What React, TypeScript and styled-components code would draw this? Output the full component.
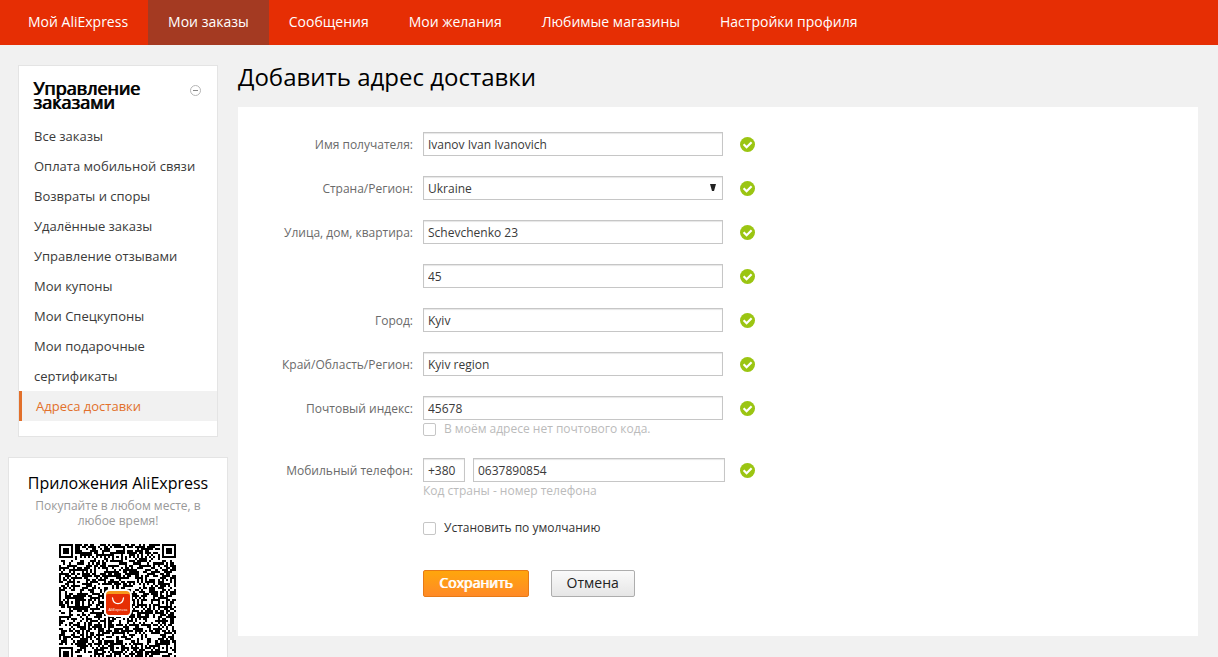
import React from 'react';
import styled, { createGlobalStyle, css } from 'styled-components';

const GlobalStyle = createGlobalStyle`
  *, *::before, *::after {
    box-sizing: border-box;
  }
  body {
    margin: 0;
    background: #f1f1f1;
    color: #333;
    font-family: 'Open Sans', sans-serif;
    font-size: 13px;
  }
  input, select, button {
    font-family: inherit;
  }
`;

const TopBar = styled.nav`
  background: #e62e04;
  padding-left: 8px;
`;

const TabList = styled.ul`
  display: flex;
  margin: 0;
  padding: 0;
  list-style: none;
`;

const Tab = styled.a<{ $active?: boolean }>`
  display: block;
  padding: 0 20px 2px;
  font-size: 14px;
  line-height: 43px;
  color: #fff;
  text-decoration: none;
  background: ${(p) => (p.$active ? '#a43a22' : 'transparent')};
`;

const Page = styled.div`
  display: flex;
  align-items: flex-start;
  gap: 10px;
  padding: 20px 20px 0 8px;
`;

const Sidebar = styled.aside`
  flex: 0 0 220px;
  display: flex;
  flex-direction: column;
  gap: 20px;
`;

const Card = styled.section`
  background: #fff;
  border: 1px solid #e4e4e4;
`;

const MenuCard = styled(Card)`
  margin: 0 10px;
  padding: 15px 0 15px;
`;

const MenuHeader = styled.div`
  display: flex;
  justify-content: space-between;
  align-items: flex-start;
  padding: 0 16px 12px 14px;
`;

const MenuTitle = styled.h2`
  margin: 0;
  width: 120px;
  font-size: 18px;
  line-height: 14px;
  font-weight: 400;
  color: #000;
  text-shadow: 1px 0 0 #000;
`;

const CollapseButton = styled.button`
  display: flex;
  margin-top: 4px;
  padding: 0;
  border: 0;
  background: none;
  cursor: pointer;
`;

const MenuList = styled.ul`
  margin: 0;
  padding: 0;
  list-style: none;
`;

const MenuLink = styled.a<{ $active?: boolean }>`
  display: block;
  padding: 0 20px 0 15px;
  line-height: 30px;
  color: #3a3a3a;
  text-decoration: none;
  ${(p) =>
    p.$active &&
    css`
      padding-left: 14px;
      border-left: 3px solid #e2702b;
      background: #f1f1f1;
      color: #e2702b;
    `}
`;

const AppCard = styled(Card)`
  padding: 14px 15px 20px;
  text-align: center;
`;

const AppTitle = styled.h2`
  margin: 0;
  font-size: 16px;
  line-height: 22px;
  font-weight: 400;
  color: #000;
`;

const AppText = styled.p`
  margin: 4px 0 16px;
  font-size: 12px;
  line-height: 15px;
  color: #999;
`;

const Main = styled.main`
  flex: 1;
  min-width: 0;
`;

const Title = styled.h1`
  margin: 0 0 18px;
  font-size: 24px;
  line-height: 24px;
  font-weight: 400;
  color: #000;
`;

const Panel = styled.form`
  display: flex;
  flex-direction: column;
  gap: 20px;
  padding: 25px 20px 39px 0;
  background: #fff;
`;

const Row = styled.div`
  display: grid;
  grid-template-columns: 175px 307px 15px;
  column-gap: 10px;
  align-items: start;
`;

const Label = styled.label`
  height: 24px;
  font-size: 12px;
  line-height: 26px;
  text-align: right;
  color: #6a6a6a;
`;

const Field = styled.div`
  grid-column: 2;
`;

const control = css`
  display: block;
  height: 24px;
  padding: 0 4px;
  border: 1px solid #c6c6c6;
  border-radius: 0;
  background: #fff;
  box-shadow: inset 0 1px 1px #e6e6e6;
  font-size: 12px;
  line-height: 22px;
  color: #3a3a3a;
  outline: none;
`;

const TextInput = styled.input<{ $width?: number }>`
  ${control}
  width: ${(p) => p.$width ?? 300}px;
`;

const SelectBox = styled.div`
  position: relative;
  width: 300px;
`;

const Select = styled.select`
  ${control}
  width: 100%;
  padding-top: 1px;
  appearance: none;
`;

const SelectArrow = styled.svg`
  position: absolute;
  right: 7px;
  top: 8px;
  pointer-events: none;
`;

const PhoneInputs = styled.div`
  display: flex;
  gap: 8px;
`;

const Hint = styled.p`
  margin: 0;
  font-size: 12px;
  line-height: 18px;
  color: #bbb;
`;

const CheckLabel = styled.label<{ $muted?: boolean }>`
  display: flex;
  align-items: center;
  gap: 8px;
  height: ${(p) => (p.$muted ? 18 : 16)}px;
  font-size: 12px;
  line-height: 16px;
  color: ${(p) => (p.$muted ? '#bbb' : '#333')};
`;

const Checkbox = styled.input`
  appearance: none;
  width: 13px;
  height: 13px;
  margin: 0;
  border: 1px solid #c6c6c6;
  border-radius: 2px;
  background: #fff;
`;

const StatusIcon = styled.svg`
  display: block;
  margin-top: 5px;
`;

const Actions = styled.div`
  display: flex;
  gap: 22px;
  padding: 14px 0 0 185px;
`;

const Button = styled.button<{ $primary?: boolean }>`
  height: 27px;
  padding: 0 15px 1px;
  border: 1px solid ${(p) => (p.$primary ? '#e77a16' : '#adadad')};
  border-radius: 2px;
  background: ${(p) =>
    p.$primary
      ? 'linear-gradient(#ffa60c, #ff8a27)'
      : 'linear-gradient(#fafafa, #e6e6e6)'};
  font-size: 14px;
  line-height: 24px;
  color: ${(p) => (p.$primary ? '#fff' : '#222')};
  text-shadow: ${(p) => (p.$primary ? '1px 0 0 #fff' : 'none')};
  cursor: pointer;
`;

const ValidMark = () => (
  <StatusIcon width="15" height="15" viewBox="0 0 15 15" role="img" aria-label="Верно">
    <circle cx="7.5" cy="7.5" r="7.5" fill="#9bc512" />
    <path d="M3.6 7.2l3 3 5-5" fill="none" stroke="#fff" strokeWidth="2.2" />
  </StatusIcon>
);

const QR_SIZE = 57;
const ALIGNMENT = [6, 28, 50];

function isDark(x: number, y: number): boolean {
  const last = QR_SIZE - 7;
  const corners = [[0, 0], [last, 0], [0, last]];
  for (const [cx, cy] of corners) {
    const d = Math.max(Math.abs(x - cx - 3), Math.abs(y - cy - 3));
    if (d <= 4) return d <= 1 || d === 3;
  }
  for (const ax of ALIGNMENT) {
    for (const ay of ALIGNMENT) {
      const onFinder = (ax === 6 && ay === 6) || (ax === 6 && ay === 50) || (ax === 50 && ay === 6);
      const d = Math.max(Math.abs(x - ax), Math.abs(y - ay));
      if (!onFinder && d <= 2) return d !== 1;
    }
  }
  if (x === 6 || y === 6) return (x + y) % 2 === 0;
  let h = Math.imul(x + 11, 374761393) ^ Math.imul(y + 7, 668265263);
  h = Math.imul(h ^ (h >>> 13), 1274126177);
  h ^= h >>> 16;
  return (h & 255) < 140;
}

function qrPath(): string {
  let d = '';
  for (let y = 0; y < QR_SIZE; y++) {
    for (let x = 0; x < QR_SIZE; x++) {
      if (isDark(x, y)) d += `M${x} ${y}h1v1h-1z`;
    }
  }
  return d;
}

const QrCode = () => (
  <svg width="118" height="118" viewBox="0 0 118 118" role="img" aria-label="QR">
    <path d={qrPath()} transform="scale(2.0526)" fill="#000" shapeRendering="crispEdges" />
    <rect x="45" y="45" width="28" height="28" rx="6" fill="#fff" />
    <rect x="47" y="47" width="24" height="24" rx="4" fill="#f7981d" />
    <path d="M47 52q0-2 2-2h20q2 0 2 2v15q0 4-4 4h-16q-4 0-4-4z" fill="#e62e04" />
    <path d="M53.5 54c1 7.5 10 7.5 11 0" fill="none" stroke="#fff" strokeWidth="1.3" strokeLinecap="round" />
    <text x="59" y="67" fontSize="4" textAnchor="middle" fill="#fff">AliExpress</text>
  </svg>
);

const tabs = ['Мой AliExpress', 'Мои заказы', 'Сообщения', 'Мои желания', 'Любимые магазины', 'Настройки профиля'];

const menu = [
  'Все заказы',
  'Оплата мобильной связи',
  'Возвраты и споры',
  'Удалённые заказы',
  'Управление отзывами',
  'Мои купоны',
  'Мои Спецкупоны',
  'Мои подарочные сертификаты',
  'Адреса доставки',
];

export default function App() {
  return (
    <>
      <GlobalStyle />
      <TopBar>
        <TabList>
          {tabs.map((name, i) => (
            <li key={name}>
              <Tab href="#" $active={i === 1}>{name}</Tab>
            </li>
          ))}
        </TabList>
      </TopBar>
      <Page>
        <Sidebar>
          <MenuCard>
            <MenuHeader>
              <MenuTitle>Управление заказами</MenuTitle>
              <CollapseButton type="button" aria-label="Свернуть">
                <svg width="11" height="11" viewBox="0 0 11 11">
                  <circle cx="5.5" cy="5.5" r="5" fill="#fff" stroke="#b5b5b5" />
                  <path d="M3 5.5h5" stroke="#888" />
                </svg>
              </CollapseButton>
            </MenuHeader>
            <MenuList>
              {menu.map((name, i) => (
                <li key={name}>
                  <MenuLink href="#" $active={i === menu.length - 1}>{name}</MenuLink>
                </li>
              ))}
            </MenuList>
          </MenuCard>
          <AppCard>
            <AppTitle>Приложения AliExpress</AppTitle>
            <AppText>Покупайте в любом месте, в любое время!</AppText>
            <QrCode />
          </AppCard>
        </Sidebar>
        <Main>
          <Title>Добавить адрес доставки</Title>
          <Panel onSubmit={(e) => e.preventDefault()}>
            <Row>
              <Label htmlFor="name">Имя получателя:</Label>
              <Field><TextInput id="name" defaultValue="Ivanov Ivan Ivanovich" /></Field>
              <ValidMark />
            </Row>
            <Row>
              <Label htmlFor="country">Страна/Регион:</Label>
              <Field>
                <SelectBox>
                  <Select id="country" defaultValue="Ukraine">
                    <option>Ukraine</option>
                  </Select>
                  <SelectArrow width="6" height="7" viewBox="0 0 6 7">
                    <path d="M0 0h6l-2 7h-2z" fill="#222" />
                  </SelectArrow>
                </SelectBox>
              </Field>
              <ValidMark />
            </Row>
            <Row>
              <Label htmlFor="street">Улица, дом, квартира:</Label>
              <Field><TextInput id="street" defaultValue="Schevchenko 23" /></Field>
              <ValidMark />
            </Row>
            <Row>
              <Field><TextInput aria-label="Квартира" defaultValue="45" /></Field>
              <ValidMark />
            </Row>
            <Row>
              <Label htmlFor="city">Город:</Label>
              <Field><TextInput id="city" defaultValue="Kyiv" /></Field>
              <ValidMark />
            </Row>
            <Row>
              <Label htmlFor="region">Край/Область/Регион:</Label>
              <Field><TextInput id="region" defaultValue="Kyiv region" /></Field>
              <ValidMark />
            </Row>
            <Row>
              <Label htmlFor="zip">Почтовый индекс:</Label>
              <Field>
                <TextInput id="zip" defaultValue="45678" />
                <CheckLabel $muted>
                  <Checkbox type="checkbox" />
                  В моём адресе нет почтового кода.
                </CheckLabel>
              </Field>
              <ValidMark />
            </Row>
            <Row>
              <Label htmlFor="phone">Мобильный телефон:</Label>
              <Field>
                <PhoneInputs>
                  <TextInput $width={42} aria-label="Код страны" defaultValue="+380" />
                  <TextInput $width={252} id="phone" defaultValue="0637890854" />
                </PhoneInputs>
                <Hint>Код страны - номер телефона</Hint>
              </Field>
              <ValidMark />
            </Row>
            <Row>
              <Field>
                <CheckLabel>
                  <Checkbox type="checkbox" />
                  Установить по умолчанию
                </CheckLabel>
              </Field>
            </Row>
            <Actions>
              <Button type="submit" $primary>Сохранить</Button>
              <Button type="button">Отмена</Button>
            </Actions>
          </Panel>
        </Main>
      </Page>
    </>
  );
}
